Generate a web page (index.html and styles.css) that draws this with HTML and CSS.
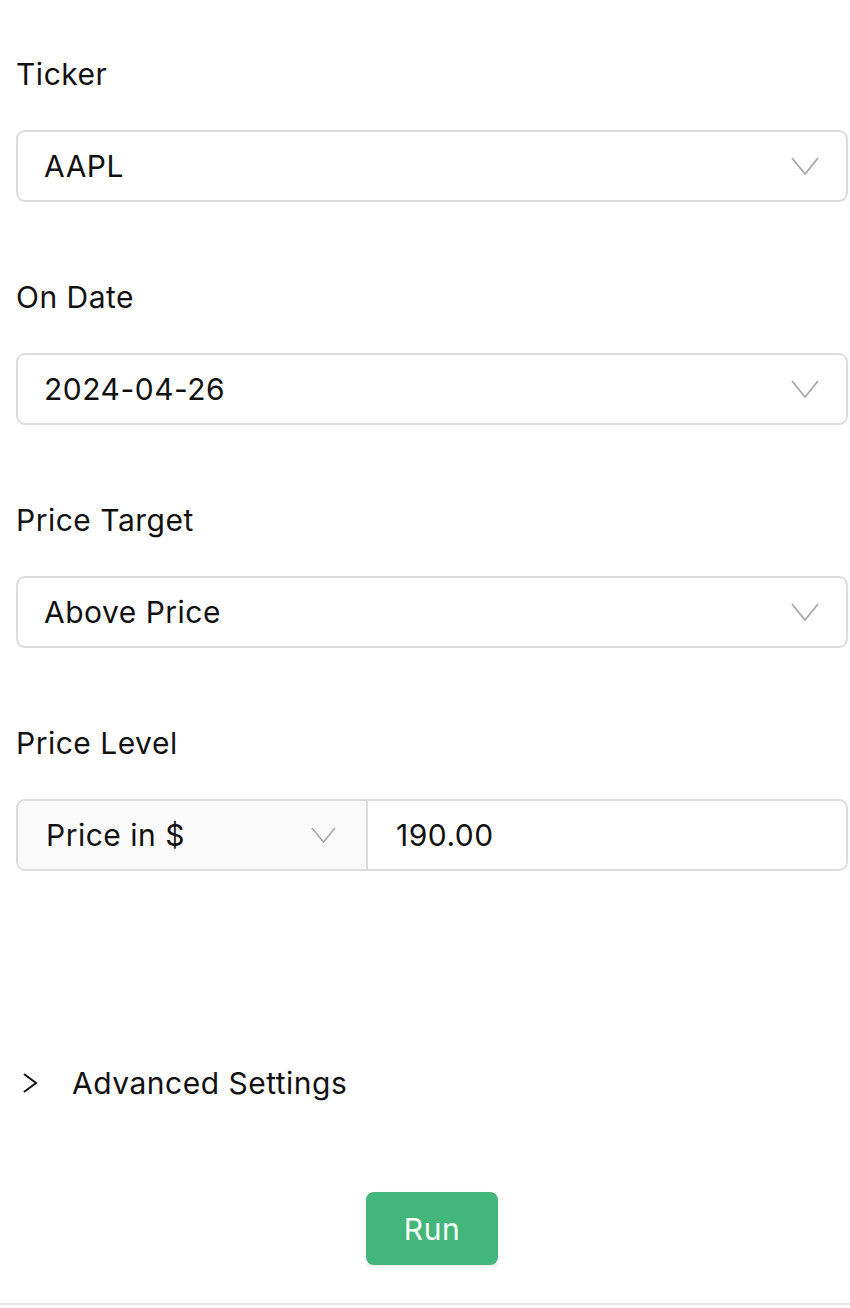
FILE: index.html
```html
<!DOCTYPE html>
<html lang="en">
<head>
  <meta charset="UTF-8">
  <meta name="viewport" content="width=device-width, initial-scale=1.0">
  <title>Price Target</title>
  <link rel="stylesheet" href="styles.css">
</head>
<body>
  <form class="form">
    <div class="field">
      <label>Ticker</label>
      <div class="select">
        <span>AAPL</span>
        <svg class="chevron" viewBox="0 0 28 18"><polyline points="1,1 14,17 27,1"/></svg>
      </div>
    </div>

    <div class="field">
      <label>On Date</label>
      <div class="select">
        <span>2024-04-26</span>
        <svg class="chevron" viewBox="0 0 28 18"><polyline points="1,1 14,17 27,1"/></svg>
      </div>
    </div>

    <div class="field">
      <label>Price Target</label>
      <div class="select">
        <span>Above Price</span>
        <svg class="chevron" viewBox="0 0 28 18"><polyline points="1,1 14,17 27,1"/></svg>
      </div>
    </div>

    <div class="field">
      <label>Price Level</label>
      <div class="input-group">
        <div class="unit">
          <span>Price in $</span>
          <svg class="chevron" viewBox="0 0 28 18"><polyline points="1,1 14,17 27,1"/></svg>
        </div>
        <div class="value">190.00</div>
      </div>
    </div>

    <div class="advanced">
      <svg class="arrow" viewBox="0 0 16 22"><polyline points="2,2 14,11 2,20"/></svg>
      <span>Advanced Settings</span>
    </div>

    <div class="actions">
      <button type="button">Run</button>
    </div>
  </form>
</body>
</html>
```

FILE: styles.css
```css
* {
  box-sizing: border-box;
}

body {
  margin: 0;
  background-color: #fff;
  font-family: Inter, "Liberation Sans", sans-serif;
  color: #111;
  font-size: 30px;
  letter-spacing: 0.5px;
}

.form {
  padding: 56px 2px 0 16px;
  border-bottom: 2px solid #e6e6e6;
}

.field {
  margin-bottom: 77px;
}

.field label {
  display: block;
  line-height: 36px;
  margin-bottom: 38px;
}

.select {
  display: flex;
  align-items: center;
  justify-content: space-between;
  height: 72px;
  padding: 0 27px 0 26px;
  border: 2px solid #dcdcdc;
  border-radius: 9px;
}

.chevron {
  width: 28px;
  height: 18px;
  fill: none;
  stroke: #a8a8a8;
  stroke-width: 1.8;
}

.input-group {
  display: flex;
  height: 72px;
  border: 2px solid #dcdcdc;
  border-radius: 9px;
  overflow: hidden;
}

.unit {
  width: 350px;
  display: flex;
  align-items: center;
  justify-content: space-between;
  padding: 0 30px 0 28px;
  background-color: #fafafa;
  border-right: 2px solid #dcdcdc;
}

.unit .chevron {
  width: 25px;
  height: 16px;
}

.value {
  flex: 1;
  display: flex;
  align-items: center;
  padding-left: 28px;
}

.advanced {
  display: flex;
  align-items: center;
  gap: 34px;
  margin-top: 194px;
  padding-left: 6px;
  line-height: 36px;
}

.arrow {
  width: 16px;
  height: 22px;
  fill: none;
  stroke: #111;
  stroke-width: 2;
}

.actions {
  display: flex;
  justify-content: center;
  padding: 91px 0 38px;
}

button {
  width: 132px;
  height: 73px;
  background-color: #43b77a;
  color: #fff;
  border: none;
  border-radius: 8px;
  font-family: inherit;
  font-size: 30px;
  letter-spacing: 0.5px;
  box-shadow: 0 2px 4px rgba(0, 0, 0, 0.08);
  cursor: pointer;
}
```
